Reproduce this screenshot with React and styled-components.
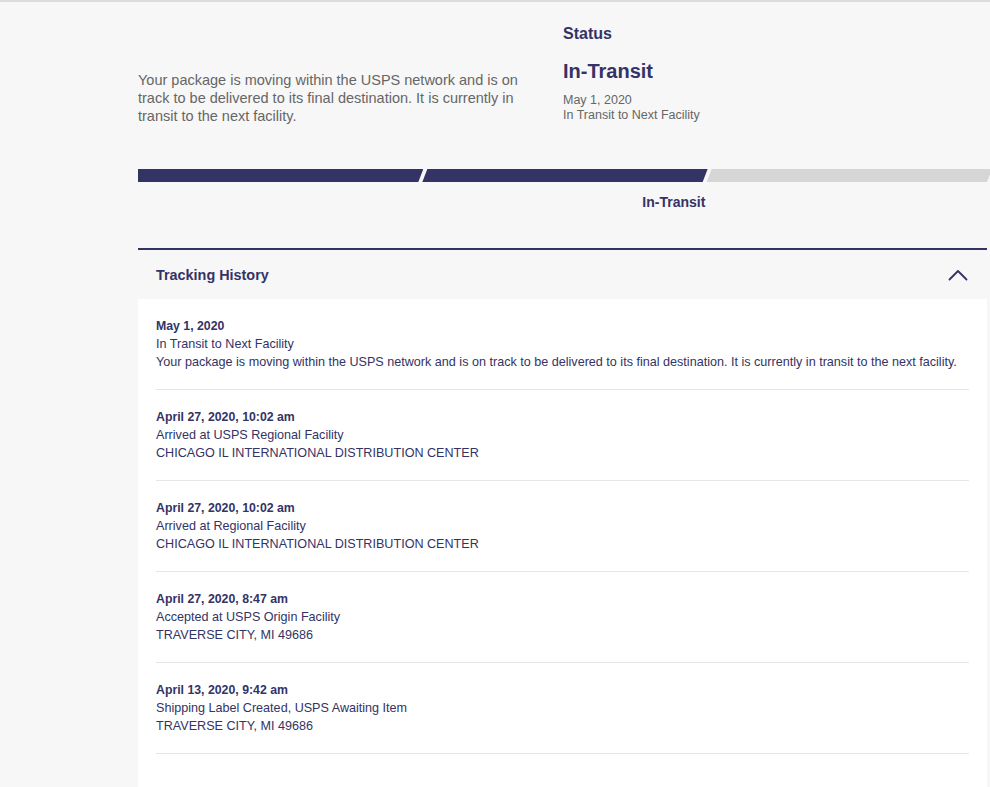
import React from "react";
import styled, { createGlobalStyle } from "styled-components";

const navy = "#333366";

const GlobalStyle = createGlobalStyle`
  html, body { margin: 0; padding: 0; overflow: hidden; }
  body {
    background: #f7f7f7;
    font-family: "Liberation Sans", Arial, Helvetica, sans-serif;
    color: ${navy};
  }
`;

const Page = styled.div`
  border-top: 2px solid #dcdcdc;
  padding-left: 138px;
  height: 787px;
  box-sizing: border-box;
  display: flex;
  flex-direction: column;
`;

const Summary = styled.section`
  display: grid;
  grid-template-columns: 425px 1fr;
  height: 167px;
  box-sizing: border-box;
  padding-top: 23px;
`;

const Lead = styled.p`
  margin: 0;
  padding-top: 46px;
  width: 400px;
  font-size: 14.5px;
  line-height: 18px;
  color: #666666;
`;

const StatusBlock = styled.div`
  display: flex;
  flex-direction: column;
`;

const StatusLabel = styled.h3`
  margin: 0;
  font-size: 16px;
  line-height: 18px;
  font-weight: 700;
  color: ${navy};
`;

const StatusValue = styled.h2`
  margin: 16px 0 0;
  font-size: 20px;
  line-height: 24px;
  font-weight: 700;
  color: ${navy};
`;

const StatusMeta = styled.div`
  margin-top: 10px;
  font-size: 12.5px;
  line-height: 15px;
  color: #666666;
`;

const Progress = styled.div`
  display: flex;
  width: 854px;
  height: 13px;
`;

const Segment = styled.div`
  flex: 1;
  height: 100%;
  margin-left: ${(p) => (p.$first ? "0" : "-1px")};
  background: ${(p) => (p.$done ? navy : "#d6d6d6")};
  clip-path: ${(p) =>
    p.$first
      ? "polygon(0 0, 100% 0, calc(100% - 5px) 100%, 0 100%)"
      : "polygon(5px 0, 100% 0, calc(100% - 5px) 100%, 0 100%)"};
`;

const Labels = styled.div`
  display: flex;
  width: 854px;
  margin-top: 12px;
`;

const StepLabel = styled.div`
  flex: 1;
  text-align: right;
  padding-right: 2px;
  font-size: 14px;
  line-height: 16px;
  font-weight: 700;
  color: ${navy};
`;

const History = styled.section`
  margin-top: 38px;
  width: 849px;
  border-top: 2px solid ${navy};
  flex: 1;
  display: flex;
  flex-direction: column;
`;

const HistoryHeader = styled.div`
  height: 49px;
  padding: 0 19px 0 18px;
  display: flex;
  align-items: center;
  justify-content: space-between;
`;

const HistoryTitle = styled.h3`
  margin: 0;
  font-size: 14.4px;
  font-weight: 700;
  color: ${navy};
`;

const HistoryBody = styled.ul`
  list-style: none;
  margin: 0;
  padding: 0 18px;
  background: #ffffff;
  flex: 1;
`;

const Event = styled.li`
  padding: 18px 0;
  border-bottom: 1px solid #e6e6e6;
  font-size: 12.6px;
  line-height: 18px;
  color: ${navy};
`;

const EventDate = styled.div`
  font-weight: 700;
  font-size: 12.3px;
`;

const Chevron = () => (
  <svg width="20" height="12" viewBox="0 0 20 12" fill="none">
    <polyline
      points="1.5,10.5 10,2 18.5,10.5"
      stroke={navy}
      strokeWidth="1.8"
      strokeLinecap="round"
      strokeLinejoin="round"
    />
  </svg>
);

const events = [
  {
    date: "May 1, 2020",
    status: "In Transit to Next Facility",
    detail:
      "Your package is moving within the USPS network and is on track to be delivered to its final destination. It is currently in transit to the next facility.",
  },
  {
    date: "April 27, 2020, 10:02 am",
    status: "Arrived at USPS Regional Facility",
    detail: "CHICAGO IL INTERNATIONAL DISTRIBUTION CENTER",
  },
  {
    date: "April 27, 2020, 10:02 am",
    status: "Arrived at Regional Facility",
    detail: "CHICAGO IL INTERNATIONAL DISTRIBUTION CENTER",
  },
  {
    date: "April 27, 2020, 8:47 am",
    status: "Accepted at USPS Origin Facility",
    detail: "TRAVERSE CITY, MI 49686",
  },
  {
    date: "April 13, 2020, 9:42 am",
    status: "Shipping Label Created, USPS Awaiting Item",
    detail: "TRAVERSE CITY, MI 49686",
  },
];

export default function App() {
  return (
    <>
      <GlobalStyle />
      <Page>
        <Summary>
          <Lead>
            Your package is moving within the USPS network and is on track to be
            delivered to its final destination. It is currently in transit to
            the next facility.
          </Lead>
          <StatusBlock>
            <StatusLabel>Status</StatusLabel>
            <StatusValue>In-Transit</StatusValue>
            <StatusMeta>
              May 1, 2020
              <br />
              In Transit to Next Facility
            </StatusMeta>
          </StatusBlock>
        </Summary>

        <Progress>
          <Segment $first $done />
          <Segment $done />
          <Segment />
        </Progress>
        <Labels>
          <StepLabel />
          <StepLabel>In-Transit</StepLabel>
          <StepLabel />
        </Labels>

        <History>
          <HistoryHeader>
            <HistoryTitle>Tracking History</HistoryTitle>
            <Chevron />
          </HistoryHeader>
          <HistoryBody>
            {events.map((e, i) => (
              <Event key={i}>
                <EventDate>{e.date}</EventDate>
                <div>{e.status}</div>
                <div>{e.detail}</div>
              </Event>
            ))}
          </HistoryBody>
        </History>
      </Page>
    </>
  );
}
